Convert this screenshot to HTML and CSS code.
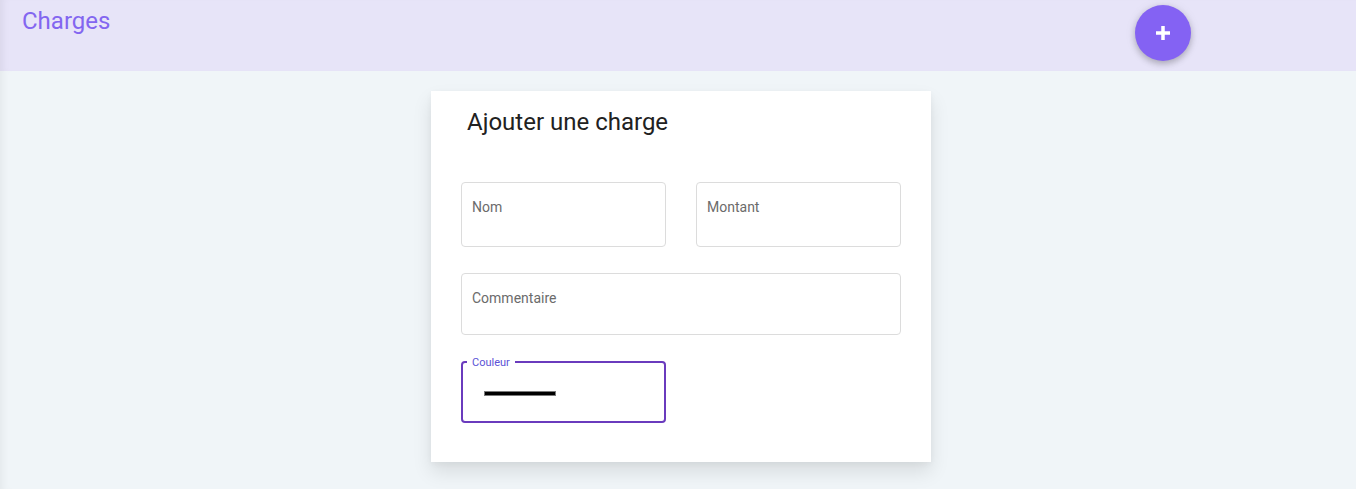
FILE: index.html
```html
<!DOCTYPE html>
<html lang="fr">
<head>
<meta charset="utf-8">
<title>Charges</title>
<link rel="stylesheet" href="styles.css">
</head>
<body>
<header class="topbar">
  <h1 class="topbar-title">Charges</h1>
  <button class="fab" aria-label="Ajouter">
    <svg width="14" height="14" viewBox="0 0 14 14"><rect x="5.25" y="0" width="3.5" height="14" fill="#fff"/><rect x="0" y="5.25" width="14" height="3.5" fill="#fff"/></svg>
  </button>
</header>
<main class="content">
  <section class="card">
    <h2 class="card-title">Ajouter une charge</h2>
    <div class="form">
      <div class="row">
        <div class="field field-tall"><span class="field-label">Nom</span></div>
        <div class="field field-tall"><span class="field-label">Montant</span></div>
      </div>
      <div class="field field-wide"><span class="field-label">Commentaire</span></div>
      <div class="row">
        <div class="field field-focus">
          <span class="float-label">Couleur</span>
          <span class="swatch"></span>
        </div>
      </div>
    </div>
  </section>
</main>
</body>
</html>
```

FILE: styles.css
```css
html, body {
  margin: 0;
  padding: 0;
}
body {
  background: #f0f5f8;
  font-family: Roboto, "Noto Sans", Arial, sans-serif;
  min-height: 489px;
}
.topbar {
  height: 71px;
  box-sizing: border-box;
  background: #e7e4f8;
  display: flex;
  justify-content: space-between;
  align-items: flex-start;
  padding: 0 165px 0 22px;
  box-shadow: inset 8px 0 8px -6px rgba(0,0,0,0.07);
}
.topbar-title {
  margin: 7px 0 0;
  font-size: 24px;
  line-height: 28px;
  font-weight: 400;
  color: #8366f0;
}
.fab {
  margin-top: 5px;
  width: 56px;
  height: 56px;
  border-radius: 50%;
  border: none;
  background: #8462f3;
  box-shadow: 0 3px 6px rgba(0,0,0,0.22), 0 1px 12px rgba(0,0,0,0.08);
  display: flex;
  align-items: center;
  justify-content: center;
  padding: 0;
}
.fab svg { display: block; }
.content {
  padding-top: 20px;
  min-height: 418px;
  box-sizing: border-box;
  box-shadow: inset 8px 0 8px -6px rgba(0,0,0,0.06);
}
.card {
  width: 500px;
  box-sizing: border-box;
  margin-left: calc(50% - 247px);
  background: #fff;
  padding: 15px 30px 39px;
  box-shadow: 0 10px 18px rgba(0,0,0,0.10), 0 2px 6px rgba(0,0,0,0.04);
}
.card-title {
  margin: 0 0 44px 6px;
  font-size: 24px;
  line-height: 32px;
  font-weight: 400;
  color: #212121;
}
.form {
  display: flex;
  flex-direction: column;
  gap: 26px;
}
.row {
  display: flex;
  gap: 30px;
}
.field {
  position: relative;
  box-sizing: border-box;
  width: 205px;
  height: 62px;
  border: 1px solid #dcdcdc;
  border-radius: 4px;
  padding: 14px 10px 0;
}
.field-tall { height: 65px; }
.field-wide { width: 440px; height: 62px; }
.field-label {
  display: block;
  font-size: 14px;
  line-height: 20px;
  color: #6b6b6b;
}
.field-focus {
  border: 2px solid #6a3bbd;
  padding: 28px 21px 0;
}
.float-label {
  position: absolute;
  top: -7px;
  left: 4px;
  padding: 0 5px;
  background: #fff;
  font-size: 11px;
  line-height: 13px;
  color: #5c52d6;
}
.swatch {
  display: block;
  width: 70px;
  height: 3px;
  background: #000;
  border: 1px solid #7a7a7a;
}
```
